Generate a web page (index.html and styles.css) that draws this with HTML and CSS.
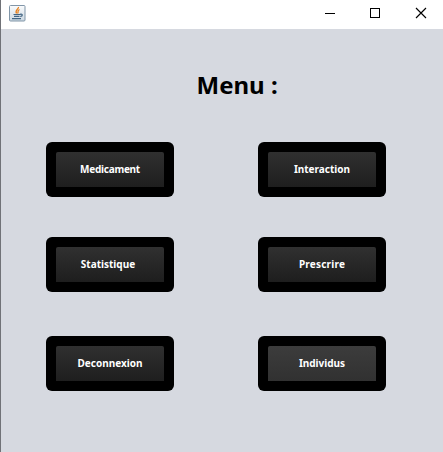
FILE: index.html
```html
<!DOCTYPE html>
<html lang="fr">
<head>
<meta charset="utf-8">
<title>Menu</title>
<link rel="stylesheet" href="styles.css">
</head>
<body>
<div class="window">
  <header class="titlebar">
    <svg class="app-icon" width="17" height="17" viewBox="0 0 17 17">
      <defs><linearGradient id="tile" x2="0" y2="1"><stop offset="0" stop-color="#fbfcfd"/><stop offset="1" stop-color="#ccd8e2"/></linearGradient></defs>
      <rect x=".5" y=".5" width="15.5" height="15.5" rx="1" fill="url(#tile)" stroke="#8196a8"/>
      <path d="M9.500 2C10 4 5.500 5 7.500 8.500M10.500 4.500C7.500 6 10 7 8.500 8.500" fill="none" stroke="#e8801c" stroke-width="1.300"/>
      <path d="M4.500 9.500h6.500M5 11.300h5.500M3 13.600h9M11 9.300c3-.8 3 1.700.2 2.200" fill="none" stroke="#426583" stroke-width="1.200"/>
    </svg>
    <div class="controls">
      <svg width="12" height="12" viewBox="0 0 12 12" shape-rendering="crispEdges"><path d="M1 6.500h10" stroke="#000"/></svg>
      <svg width="12" height="12" viewBox="0 0 12 12" shape-rendering="crispEdges"><path d="M1.500 1.500h9v9h-9z" fill="none" stroke="#000"/></svg>
      <svg class="close" width="12" height="12" viewBox="0 0 12 12"><path d="M1 1l10 10M11 1L1 11" stroke="#000" stroke-width="1.150"/></svg>
    </div>
  </header>
  <main class="content">
    <h1 class="title">Menu :</h1>
    <div class="menu">
      <button class="item"><span class="label tight">Medicament</span></button>
      <button class="item"><span class="label">Interaction</span></button>
      <button class="item"><span class="label shifted">Statistique</span></button>
      <button class="item"><span class="label wide">Prescrire</span></button>
      <button class="item"><span class="label">Deconnexion</span></button>
      <button class="item active"><span class="label">Individus</span></button>
    </div>
  </main>
</div>
</body>
</html>
```
FILE: styles.css
```css
body {
  margin: 0;
  background: #d6d9e0;
  font-family: "Noto Sans", sans-serif;
}
.window {
  box-sizing: border-box;
  height: 452px;
  border-left: 1px solid #707277;
  overflow: hidden;
}
.titlebar {
  display: flex;
  align-items: flex-start;
  justify-content: space-between;
  box-sizing: border-box;
  height: 29px;
  padding: 5px 16px 0 8px;
  background: #fff;
}
.app-icon { display: block; }
.controls {
  display: flex;
  gap: 33px;
  padding-top: 2px;
}
.controls svg { display: block; }
.controls .close { margin-left: 1px; }
.title {
  margin: 0;
  padding: 39px 0 0 195.5px;
  height: 74px;
  line-height: 33px;
  font-size: 24px;
  font-weight: 700;
  color: #000;
  white-space: nowrap;
}
.menu {
  display: grid;
  grid-template-columns: 128px 128px;
  grid-template-rows: 95px 99px 55px;
  column-gap: 84px;
  padding-left: 45px;
}
.item {
  display: flex;
  box-sizing: border-box;
  width: 128px;
  height: 55px;
  padding: 10px;
  border: 0;
  border-radius: 6px;
  background: #000;
  color: #fff;
  font: 700 10px/15px "Noto Sans", sans-serif;
}
.label {
  box-sizing: border-box;
  width: 108px;
  height: 35px;
  padding-top: 10px;
  border-radius: 2px 2px 0 0;
  background: linear-gradient(#303030, #1e1e1e);
  text-align: center;
}
.active .label { background: linear-gradient(#3c3c3c, #313131); }
.shifted { padding-right: 4px; }
.tight { letter-spacing: -0.25px; }
.wide { letter-spacing: 0.2px; }
```
